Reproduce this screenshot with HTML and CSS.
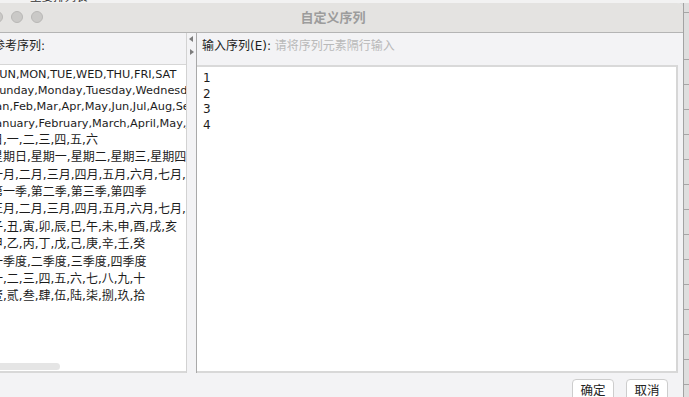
FILE: index.html
```html
<!DOCTYPE html>
<html lang="zh">
<head>
  <meta charset="UTF-8" />
  <meta name="viewport" content="width=device-width, initial-scale=1.0" />
  <title>自定义序列</title>
  <link rel="stylesheet" href="styles.css">
</head>
<body>

<!-- what shows of the sheet behind the dialog -->
<div class="behind"><span>主要排列表</span></div>

<div class="window">
  <div class="titlebar">
    <div class="lights">
      <span class="light"></span>
      <span class="light"></span>
      <span class="light"></span>
    </div>
    <div class="title">自定义序列</div>
  </div>

  <div class="content">
    <div class="panes">
      <!-- left: built-in sequences -->
      <div class="pane-left">
        <div class="pane-label">参考序列:</div>
        <div class="list">
          <div class="item">SUN,MON,TUE,WED,THU,FRI,SAT</div>
          <div class="item">Sunday,Monday,Tuesday,Wednesday,Thursday,Friday,Saturday</div>
          <div class="item">Jan,Feb,Mar,Apr,May,Jun,Jul,Aug,Sep,Oct,Nov,Dec</div>
          <div class="item">January,February,March,April,May,June,July,August,September,October,November,December</div>
          <div class="item cjk">日,一,二,三,四,五,六</div>
          <div class="item cjk">星期日,星期一,星期二,星期三,星期四,星期五,星期六</div>
          <div class="item cjk">一月,二月,三月,四月,五月,六月,七月,八月,九月,十月,十一月,十二月</div>
          <div class="item cjk">第一季,第二季,第三季,第四季</div>
          <div class="item cjk">正月,二月,三月,四月,五月,六月,七月,八月,九月,十月,冬月,腊月</div>
          <div class="item cjk">子,丑,寅,卯,辰,巳,午,未,申,酉,戌,亥</div>
          <div class="item cjk">甲,乙,丙,丁,戊,己,庚,辛,壬,癸</div>
          <div class="item cjk">一季度,二季度,三季度,四季度</div>
          <div class="item cjk">一,二,三,四,五,六,七,八,九,十</div>
          <div class="item cjk">壹,贰,叁,肆,伍,陆,柒,捌,玖,拾</div>
          <div class="hscroll"></div>
        </div>
      </div>

      <div class="splitter">
        <span class="arrow-left"></span>
        <span class="arrow-right"></span>
      </div>

      <!-- right: user input -->
      <div class="pane-right">
        <div class="pane-label">输入序列(E): <span class="hint">请将序列元素隔行输入</span></div>
        <div class="editor">
          <div class="line">1</div>
          <div class="line">2</div>
          <div class="line">3</div>
          <div class="line">4</div>
        </div>
      </div>
    </div>

    <div class="buttons">
      <button class="btn">确定</button>
      <button class="btn">取消</button>
    </div>
  </div>
</div>

</body>
</html>
```

FILE: styles.css
```css
body {
  margin: 0;
  width: 689px;
  height: 397px;
  overflow: hidden;
  font-family: "DejaVu Sans", "Noto Sans CJK SC", sans-serif;
  font-size: 12px;
  color: #1c1c1c;
  background-color: #dedede;
  background-image:
    linear-gradient(to right, #a3a3a3 0, #a3a3a3 1px, transparent 1px),
    repeating-linear-gradient(to bottom, transparent 0, transparent 24px, #a6a6a6 24px, #a6a6a6 25px);
  background-position: 683px 0, 0 35px;
  background-repeat: no-repeat, repeat;
}

.behind {
  height: 3px;
  overflow: hidden;
  background: #f2f2f2;
}

.behind span {
  display: block;
  margin: -9px 0 0 30px;
  font-size: 11.5px;
  line-height: 12px;
  color: #333;
}

.window {
  margin-left: -17px;
  width: 700px;
  height: 394px;
  background: #f3f3f5;
  border-radius: 6px 6px 0 0;
  overflow: hidden;
  display: flex;
  flex-direction: column;
}

.titlebar {
  position: relative;
  height: 29px;
  flex-shrink: 0;
  background: #e4e3e1;
  border-bottom: 1px solid #b4b4b4;
  display: flex;
  align-items: center;
  justify-content: center;
}

.lights {
  position: absolute;
  left: 8px;
  top: 8px;
  display: flex;
  gap: 8px;
}

.light {
  width: 12px;
  height: 12px;
  box-sizing: border-box;
  border-radius: 50%;
  background: #cac9c7;
  border: 1px solid #b9b8b6;
}

.title {
  font-family: "Noto Sans CJK SC", sans-serif;
  font-size: 13px;
  font-weight: bold;
  color: #9c9c9c;
  margin-top: -2px;
}

.content {
  flex: 1;
  display: flex;
  flex-direction: column;
}

.panes {
  height: 340px;
  display: flex;
}

.pane-left {
  width: 204px;
  box-sizing: border-box;
  border-right: 1px solid #d2d2d2;
  display: flex;
  flex-direction: column;
}

.pane-label {
  height: 31px;
  line-height: 27px;
  padding-left: 10px;
  white-space: nowrap;
  color: #1c1c1c;
  flex-shrink: 0;
}

.list {
  position: relative;
  flex: 1;
  margin-left: 5px;
  background: #fff;
  border-top: 1px solid #d6d6d6;
  border-left: 1px solid #d6d6d6;
  border-bottom: 2px solid #d8d8d8;
  padding: 1.8px 0 0 3px;
  overflow: hidden;
}

.item {
  height: 16.33px;
  line-height: 16.33px;
  font-size: 11.3px;
  white-space: nowrap;
}

.item.cjk {
  height: 17.35px;
  line-height: 17.35px;
  font-size: 12px;
  margin-left: -1px;
}

.hscroll {
  position: absolute;
  left: 0;
  bottom: 1px;
  width: 71px;
  height: 7px;
  border-radius: 4px;
  background: #e5e5e5;
}

.splitter {
  width: 9px;
  flex-shrink: 0;
  display: flex;
  flex-direction: column;
  align-items: center;
  padding-top: 3px;
  gap: 7px;
}

.arrow-left {
  width: 0;
  height: 0;
  border-top: 3.5px solid transparent;
  border-bottom: 3.5px solid transparent;
  border-right: 4px solid #7c7c7c;
  margin-left: -2px;
}

.arrow-right {
  width: 0;
  height: 0;
  border-top: 3.5px solid transparent;
  border-bottom: 3.5px solid transparent;
  border-left: 4px solid #7c7c7c;
}

.pane-right {
  flex: 1;
  display: flex;
  flex-direction: column;
  border-left: 1px solid #a9a9a9;
  padding-right: 5px;
}

.pane-right .pane-label {
  height: 32px;
  line-height: 27px;
  padding-left: 5px;
}

.hint {
  color: #b9b9b9;
}

.editor {
  flex: 1;
  background: #fff;
  border-top: 2px solid #d9d9d9;
  border-right: 2px solid #d6d6d6;
  border-bottom: 2px solid #d8d8d8;
  padding: 4px 0 0 6px;
}

.line {
  height: 15.7px;
  line-height: 15.7px;
}

.buttons {
  display: flex;
  justify-content: flex-end;
  gap: 12px;
  padding: 6px 15px 0 0;
}

.btn {
  width: 42px;
  height: 22px;
  padding: 0;
  background: #fff;
  border: 1px solid #cdcdcd;
  border-radius: 4px;
  font-family: "Noto Sans CJK SC", sans-serif;
  font-size: 12.5px;
  line-height: 20px;
  color: #222;
}
```
